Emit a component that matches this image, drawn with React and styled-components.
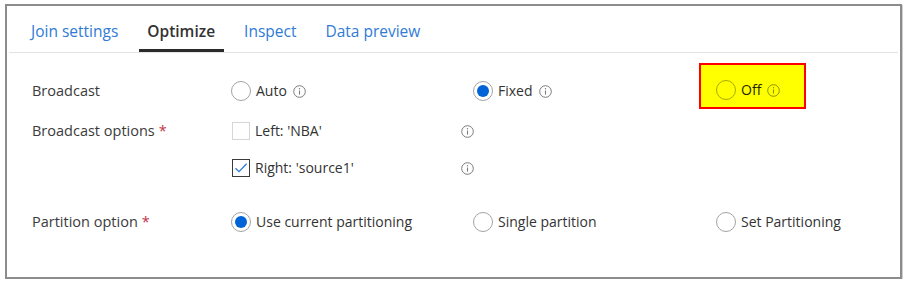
import React from "react";
import styled, { createGlobalStyle, css } from "styled-components";

const Global = createGlobalStyle`
  html, body { margin: 0; padding: 0; background: #ffffff; }
  body { font-family: "Open Sans", "Noto Sans", Arial, sans-serif; }
`;

const Panel = styled.div`
  box-sizing: border-box;
  margin: 4px 0 0 5px;
  width: 897px;
  height: 275px;
  border: 2px solid #8c8c8c;
  box-shadow: 1px 1px 0 #cfcfcf;
  background: #fff;
  padding: 0 2px;
`;

const TabBar = styled.div`
  display: flex;
  height: 46px;
  padding-left: 14px;
  gap: 12px;
  border-bottom: 1px solid #e3e3e3;
`;

const Tab = styled.div`
  position: relative;
  box-sizing: border-box;
  height: 46px;
  padding: 15px 9px 0 8px;
  font-size: 15.5px;
  line-height: 20px;
  white-space: nowrap;
  color: ${(p) => (p.$active ? "#333333" : "#2f7bd6")};
  font-weight: ${(p) => (p.$active ? 600 : 400)};
  ${(p) =>
    p.$active &&
    css`
      &::after {
        content: "";
        position: absolute;
        left: 0;
        right: 0;
        bottom: 0;
        height: 3px;
        background: #2b2b2b;
      }
    `}
`;

const Form = styled.div`
  display: flex;
  flex-direction: column;
  padding: 21px 0 0 23px;
`;

const Field = styled.div`
  display: flex;
  align-items: flex-start;
  margin-top: ${(p) => p.$top || 0}px;
`;

const Label = styled.div`
  width: 199px;
  flex: none;
  height: 34px;
  line-height: 34px;
  font-size: 14.5px;
  color: #3b3b3b;
  white-space: nowrap;
`;

const Required = styled.span`
  color: #c4314b;
  margin-left: 4px;
`;

const Options = styled.div`
  display: flex;
  align-items: center;
  height: 34px;
`;

const Stack = styled.div`
  display: flex;
  flex-direction: column;
  gap: 3px;
`;

const Option = styled.div`
  box-sizing: border-box;
  display: flex;
  align-items: center;
  width: ${(p) => p.$w}px;
  height: 34px;
  font-size: 14px;
  color: #333;
  flex: none;
`;

const Highlight = styled.div`
  display: flex;
  align-items: center;
  box-sizing: border-box;
  margin: -18px 0 -8px -17px;
  padding: 15px 24px 7px 15px;
  border: 2px solid #ff0000;
  background: #ffff00;
  font-size: 14px;
  color: #1f1f00;
`;

const RadioCircle = styled.span`
  box-sizing: border-box;
  width: 20px;
  height: 20px;
  border-radius: 50%;
  border: 1px solid ${(p) => (p.$dim ? "#a9a900" : "#a3a3a3")};
  display: inline-flex;
  align-items: center;
  justify-content: center;
  flex: none;
  margin-right: 5px;
  background: ${(p) => (p.$dim ? "transparent" : "#fff")};
  &::after {
    content: "";
    width: 12px;
    height: 12px;
    border-radius: 50%;
    background: ${(p) => (p.$checked ? "#0063d6" : "transparent")};
  }
`;

const Box = styled.span`
  box-sizing: border-box;
  width: 18px;
  height: 18px;
  border: 1px solid ${(p) => (p.$checked ? "#3a3a3a" : "#d6d6d6")};
  display: inline-flex;
  align-items: center;
  justify-content: center;
  flex: none;
  margin: 0 5px 0 1px;
  background: #fff;
`;

const OptText = styled.span`
  line-height: 20px;
  white-space: nowrap;
`;

const InfoWrap = styled.span`
  display: inline-flex;
  margin-left: 6px;
  color: ${(p) => p.$color || "#7a7a7a"};
`;

const Info = ({ color }) => (
  <InfoWrap $color={color}>
    <svg width="13" height="13" viewBox="0 0 13 13" fill="none">
      <circle cx="6.5" cy="6.5" r="5.8" stroke="currentColor" strokeWidth="1" />
      <line x1="6.5" y1="5.5" x2="6.5" y2="9.6" stroke="currentColor" strokeWidth="1.1" />
      <circle cx="6.5" cy="3.8" r="0.7" fill="currentColor" />
    </svg>
  </InfoWrap>
);

const Check = () => (
  <svg width="14" height="12" viewBox="0 0 14 12" fill="none">
    <path d="M1.5 6.2 L5 9.6 L12.6 1.8" stroke="#2a7ad8" strokeWidth="1.3" />
  </svg>
);

const Radio = ({ w, checked, label, info }) => (
  <Option $w={w}>
    <RadioCircle $checked={checked} />
    <OptText>{label}</OptText>
    {info && <Info />}
  </Option>
);

const CheckItem = ({ checked, label }) => (
  <Options>
    <Option $w={224}>
      <Box $checked={checked}>{checked && <Check />}</Box>
      <OptText>{label}</OptText>
    </Option>
    <Info />
  </Options>
);

export default function App() {
  return (
    <>
      <Global />
      <Panel>
        <TabBar>
          <Tab>Join settings</Tab>
          <Tab $active>Optimize</Tab>
          <Tab>Inspect</Tab>
          <Tab>Data preview</Tab>
        </TabBar>
        <Form>
          <Field>
            <Label>Broadcast</Label>
            <Options>
              <Radio w={242} label="Auto" info />
              <Radio w={243} checked label="Fixed" info />
              <Highlight>
                <RadioCircle $dim />
                <OptText>Off</OptText>
                <Info color="#8f8f00" />
              </Highlight>
            </Options>
          </Field>
          <Field $top={6}>
            <Label>
              Broadcast options<Required>*</Required>
            </Label>
            <Stack>
              <CheckItem label="Left: 'NBA'" />
              <CheckItem checked label="Right: 'source1'" />
            </Stack>
          </Field>
          <Field $top={20}>
            <Label>
              Partition option<Required>*</Required>
            </Label>
            <Options>
              <Radio w={242} checked label="Use current partitioning" />
              <Radio w={243} label="Single partition" />
              <Radio w={160} label="Set Partitioning" />
            </Options>
          </Field>
        </Form>
      </Panel>
    </>
  );
}
